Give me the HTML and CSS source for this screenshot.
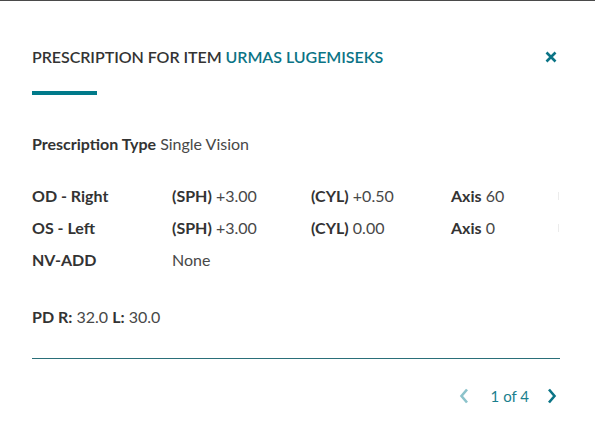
FILE: index.html
```html
<!DOCTYPE html>
<html>
<head>
<meta charset="utf-8">
<link rel="stylesheet" href="styles.css">
</head>
<body>
<div class="topline"></div>
<div class="modal">
  <div class="header">
    <h1 class="title">PRESCRIPTION FOR ITEM <span class="accent">URMAS LUGEMISEKS</span></h1>
    <button class="close" aria-label="Close">
      <svg width="12" height="12" viewBox="0 0 12 12"><path d="M1.5 1.5L10.5 10.5M10.5 1.5L1.5 10.5" stroke="#0b7486" stroke-width="2.6" stroke-linecap="butt"/></svg>
    </button>
  </div>
  <div class="bar"></div>
  <p class="type"><b>Prescription Type</b> Single Vision</p>
  <div class="grid">
    <b>OD - Right</b><span><b>(SPH)</b> +3.00</span><span><b>(CYL)</b> +0.50</span><span><b>Axis</b> 60</span><i class="edge"></i>
    <b>OS - Left</b><span><b>(SPH)</b> +3.00</span><span><b>(CYL)</b> 0.00</span><span><b>Axis</b> 0</span><i class="edge"></i>
    <b>NV-ADD</b><span>None</span><span></span><span></span><i></i>
  </div>
  <p class="pd"><b>PD R:</b> 32.0 <b>L:</b> 30.0</p>
  <div class="divider"></div>
  <div class="pager">
    <svg class="chev prev" width="10" height="16" viewBox="0 0 10 16"><path d="M8 1.5L2.5 8L8 14.5" fill="none" stroke="#8cc3cb" stroke-width="2.6"/></svg>
    <span class="count">1 of 4</span>
    <svg class="chev next" width="10" height="16" viewBox="0 0 10 16"><path d="M2 1.5L7.5 8L2 14.5" fill="none" stroke="#0b7486" stroke-width="2.6"/></svg>
  </div>
</div>
</body>
</html>
```
FILE: styles.css
```css
html, body { margin: 0; padding: 0; background: #fff; }
body { font-family: Lato, "Open Sans", sans-serif; color: #333; width: 595px; height: 428px; overflow: hidden; }
.topline { height: 1px; background: #4a4a4a; }
.modal { padding: 0 35px 0 32px; }
.header { display: flex; justify-content: space-between; align-items: center; padding-top: 46px; }
.title { margin: 0; font-size: 16px; font-weight: 600; color: #333; line-height: 20px; letter-spacing: -0.05px; }
.accent { color: #0b7486; }
.close { border: 0; background: none; padding: 0; margin-right: 3px; width: 12px; height: 12px; display: flex; }
.bar { width: 65px; height: 4px; background: #007a8a; margin-top: 24px; }
.type { margin: 39px 0 0; font-size: 16px; line-height: 20px; }
b { font-weight: 700; color: #333; }
.type, .grid span, .pd { color: #484848; }
.grid { display: grid; grid-template-columns: 140px 139px 140px 107px 2px; width: 528px; margin-top: 32px; font-size: 16px; row-gap: 12px; line-height: 20px; }
.grid > * { white-space: nowrap; }
.edge { display: block; width: 1px; height: 8px; margin-top: 6px; background: #ececec; }
.pd { margin: 37px 0 0; font-size: 16px; line-height: 20px; }
.divider { height: 1px; background: #2a6f79; margin-top: 31px; width: 528px; }
.pager { display: flex; justify-content: flex-end; align-items: center; height: 20px; margin-top: 27px; width: 525px; }
.count { font-size: 15px; color: #1a7f8e; margin: 0 18px 0 22px; }
.chev { display: block; }
```
